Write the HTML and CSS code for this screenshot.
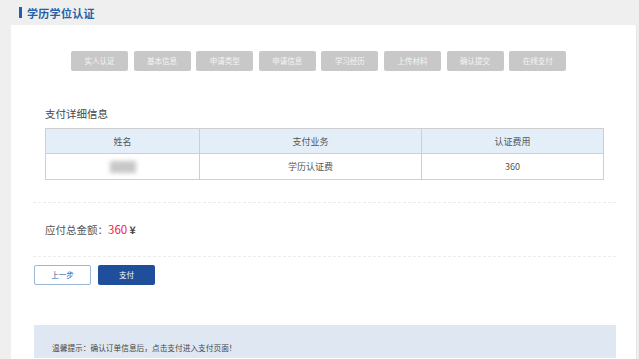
FILE: index.html
```html
<!DOCTYPE html>
<html lang="zh-CN">
<head>
  <meta charset="UTF-8">
  <meta name="viewport" content="width=device-width, initial-scale=1.0">
  <title>学历学位认证</title>
  <link rel="stylesheet" href="styles.css">
</head>
<body>
  <div class="page-head">
    <span class="head-bar"></span>
    <h1>学历学位认证</h1>
  </div>

  <div class="panel">
    <div class="steps">
      <span class="step">实人认证</span>
      <span class="step">基本信息</span>
      <span class="step">申请类型</span>
      <span class="step">申请信息</span>
      <span class="step">学习经历</span>
      <span class="step">上传材料</span>
      <span class="step">确认提交</span>
      <span class="step">在线支付</span>
    </div>

    <div class="content">
      <h2 class="section-title">支付详细信息</h2>
      <table class="pay-table">
        <thead>
          <tr>
            <th class="col-name">姓名</th>
            <th class="col-biz">支付业务</th>
            <th>认证费用</th>
          </tr>
        </thead>
        <tbody>
          <tr>
            <td><span class="masked"></span></td>
            <td>学历认证费</td>
            <td>360</td>
          </tr>
        </tbody>
      </table>

      <div class="divider"></div>
      <p class="total">应付总金额：<span class="amount">360</span> <b>¥</b></p>
      <div class="divider"></div>

      <div class="actions">
        <a href="#" class="btn btn-ghost">上一步</a>
        <a href="#" class="btn btn-primary">支付</a>
      </div>

      <div class="notice">温馨提示：确认订单信息后，点击支付进入支付页面！</div>
    </div>
  </div>
</body>
</html>
```

FILE: styles.css
```css
body {
  margin: 0;
  background: #efefef;
  font-family: "Noto Sans CJK SC", "Noto Sans", sans-serif;
  color: #444;
  height: 359px;
  overflow: hidden;
}
.page-head {
  height: 25px;
  display: flex;
  align-items: center;
  padding-left: 19px;
}
.head-bar {
  width: 3px;
  height: 11px;
  background: #1f5fb0;
  margin-right: 5px;
}
.page-head h1 {
  margin: 0;
  font-size: 11px;
  font-weight: bold;
  color: #2560a8;
  letter-spacing: 0.3px;
}
.panel {
  background: #fff;
  margin: 0 2px 0 11px;
  height: 340px;
  border-right: 1px solid #e6e6e6;
}
.steps {
  display: flex;
  gap: 5.6px;
  padding: 26px 0 0 60px;
}
.step {
  width: 57px;
  height: 20px;
  line-height: 20px;
  background: #c9c8c8;
  border-radius: 2px;
  color: #f4f4f4;
  font-size: 7.5px;
  text-align: center;
}
.content {
  padding: 0 0 0 22px;
  width: 583px;
}
.section-title {
  margin: 35px 0 6px 12px;
  font-size: 10.5px;
  font-weight: normal;
  line-height: 16px;
  color: #444;
}
.pay-table {
  margin-left: 12px;
  width: 559px;
  border-collapse: collapse;
  font-size: 9px;
  color: #555;
}
.pay-table th,
.pay-table td {
  border: 1px solid #cfcfcf;
  text-align: center;
  font-weight: normal;
}
.pay-table th {
  height: 22px;
  background: #e4eef8;
}
.pay-table td {
  height: 23px;
}
.col-name {
  width: 151px;
}
.col-biz {
  width: 219px;
}
.masked {
  display: inline-block;
  width: 26px;
  height: 12px;
  background: #c8c8c8;
  filter: blur(2px);
  vertical-align: middle;
}
.divider {
  border-top: 1px dashed #ececec;
}
.pay-table + .divider {
  margin-top: 22px;
}
.total {
  margin: 0;
  padding: 16px 0 16px 12px;
  font-size: 10.5px;
  line-height: 20px;
  color: #555;
}
.total b {
  color: #444;
}
.amount {
  color: #e8244a;
  font-size: 11.5px;
}
.actions {
  display: flex;
  gap: 7px;
  padding: 8px 0 0 1px;
}
.btn {
  width: 57px;
  height: 20px;
  line-height: 20px;
  box-sizing: border-box;
  text-align: center;
  font-size: 7.5px;
  text-decoration: none;
  border-radius: 2px;
}
.btn-ghost {
  border: 1px solid #9ab6db;
  color: #2a5ea6;
  line-height: 18px;
}
.btn-primary {
  background: #1f4f9b;
  color: #fff;
}
.notice {
  margin: 40px 0 0 1px;
  height: 33px;
  box-sizing: border-box;
  padding: 17px 0 0 18px;
  background: #dfe8f2;
  font-size: 7.7px;
  line-height: 12px;
  color: #444;
}
```
